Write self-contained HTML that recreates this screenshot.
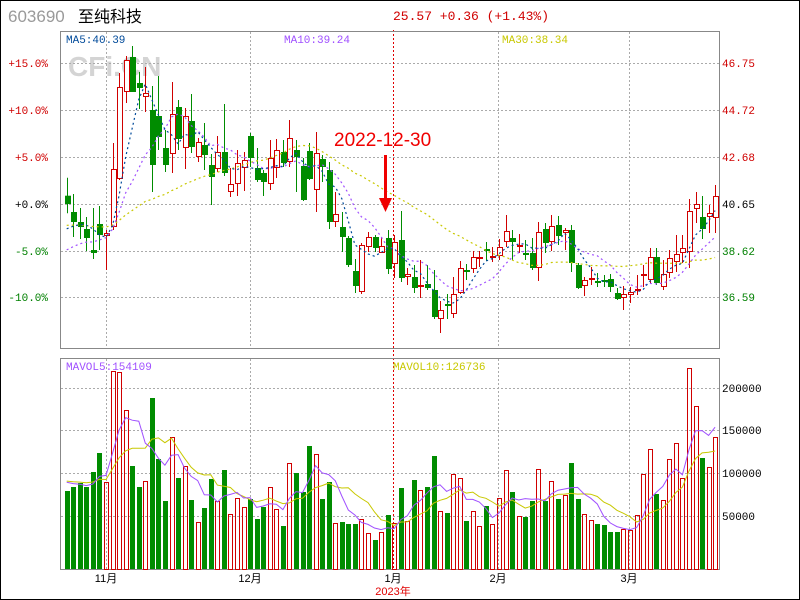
<!DOCTYPE html>
<html><head><meta charset="utf-8"><style>
html,body{margin:0;padding:0;background:#fff;}
#wrap{position:relative;width:798px;height:598px;border:1px solid #000;overflow:hidden;background:#fff;}
svg{position:absolute;left:-1px;top:-1px;}
</style></head><body><div id="wrap">
<svg id="s" width="800" height="600" xmlns="http://www.w3.org/2000/svg" font-family="Liberation Mono, monospace">
<text x="8" y="22" font-family="Liberation Sans, sans-serif" font-size="17" fill="#9a9a9a">603690</text>
<text x="78" y="22" font-family="Liberation Sans, 'Noto Sans CJK SC', sans-serif" font-size="16" fill="#000">至纯科技</text>
<text x="393" y="20" font-size="13" fill="#d00000">25.57 +0.36 (+1.43%)</text>
<text x="68" y="76" font-family="Liberation Sans, sans-serif" font-weight="bold" font-size="28" fill="#d4d4d4">CFi.CN</text>
<g id="grid"></g>
<rect x="60.5" y="31.5" width="659" height="317" fill="none" stroke="#888"/>
<rect x="60.5" y="358.5" width="659" height="211" fill="none" stroke="#888"/>
<g id="plot"></g>
<text x="66" y="43" font-size="11" fill="#004a9a">MA5:40.39</text>
<text x="284" y="43" font-size="11" fill="#a050ff">MA10:39.24</text>
<text x="502" y="43" font-size="11" fill="#c8c800">MA30:38.34</text>
<text x="66" y="370" font-size="11" fill="#a050ff">MAVOL5:154109</text>
<text x="393" y="370" font-size="11" fill="#c8c800">MAVOL10:126736</text>
<g font-size="11">
<text x="48" y="67" text-anchor="end" fill="#d00000">+15.0%</text>
<text x="48" y="114" text-anchor="end" fill="#d00000">+10.0%</text>
<text x="48" y="161" text-anchor="end" fill="#d00000">+5.0%</text>
<text x="48" y="208" text-anchor="end" fill="#000">+0.0%</text>
<text x="48" y="255" text-anchor="end" fill="#008000">-5.0%</text>
<text x="48" y="301" text-anchor="end" fill="#008000">-10.0%</text>
<text x="722" y="67" fill="#d00000">46.75</text>
<text x="722" y="114" fill="#d00000">44.72</text>
<text x="722" y="161" fill="#d00000">42.68</text>
<text x="722" y="208" fill="#000">40.65</text>
<text x="722" y="255" fill="#008000">38.62</text>
<text x="722" y="301" fill="#008000">36.59</text>
<text x="722" y="392" fill="#000">200000</text>
<text x="722" y="434" fill="#000">150000</text>
<text x="722" y="477" fill="#000">100000</text>
<text x="722" y="520" fill="#000">50000</text>
</g>
<g font-family="Liberation Sans, 'Noto Sans CJK SC', sans-serif" font-size="11" fill="#000" text-anchor="middle">
<text x="106" y="582">11月</text><text x="250" y="582">12月</text><text x="393" y="582">1月</text><text x="498" y="582">2月</text><text x="629" y="582">3月</text>
<text x="393" y="595" fill="#e00000">2023年</text>
</g>
<text x="334" y="146" font-family="Liberation Sans, sans-serif" font-size="19" fill="#f00000">2022-12-30</text>
<rect x="384" y="155" width="3" height="45" fill="#f00000"/>
<polygon points="379,198 392,198 385.5,212" fill="#f00000"/>
</svg>
</div>
<script>
var C=[
['g',195.7,204,177.7,213.3],['g',212,222,194,237],['g',222,227,208,239],['g',229,238,217,251],['g',250,253,208,259],
['g',224,235,206,250],['r',233,236,230,270],['r',169,227,143,230],['r',87,179,73,180],['r',60,92,56,103],
['g',57,92,46,92],['g',83,88,72,109],['r',93,97,67,112],['g',110,165,86,192],['g',116,137,76,150],
['g',148,165,130,172],['r',114,154,82,173],['g',107,139,100,150],['r',116,148,108,169],['g',121,147,94,153],
['r',142,157,138,162],['g',145,155,123,170],['g',165,177,154,205],['r',152,169,136,172],['g',152,173,104,176],
['r',184,192,168,197],['r',163,184,150,196],['r',160,168,152,191],['g',136,158,133,167],['g',168,180,148,182],
['g',173,182,170,196],['r',158,184,140,190],['r',150,168,139,178],['g',152,163,140,167],['r',138,162,120,167],
['g',150,157,140,192],['g',166,200,158,201],['g',151,179,143,180],['r',153,190,132,212],['g',159,167,155,182],
['g',170,222,162,229],['r',214,222,192,227],['g',227,237,212,252],['g',238,265,236,267],['g',271,286,259,293],
['r',245,292,243,294],['r',237,247,232,252],['g',237,248,235,252],['r',246,253,237,253],['g',238,269,230,274],
['r',242,264,235,278],['g',240,278,211,282],['r',274,277,268,285],['g',277,288,265,293],['r',285,286,260,298],
['g',284,288,265,290],['g',290,317,270,319],['r',310,319,301,333],['g',304,306,294,319],['r',294,314,277,318],
['r',268,293,261,294],['g',270,272,264,280],['r',257,269,251,273],['r',257,258,251,267],['g',249,251,242,261],
['r',256,257,247,262],['r',247,256,239,260],['r',231,242,215,247],['g',238,242,230,260],['r',245,247,234,253],
['g',253,254,240,260],['g',253,268,238,270],['r',232,268,222,281],['g',229,243,223,253],['r',226,242,215,251],
['g',225,236,216,245],['r',230,233,228,250],['g',230,263,225,272],['g',265,288,263,289],['r',280,286,277,296],
['r',278,279,267,285],['g',281,282,273,287],['g',280,282,275,287],['g',279,287,274,292],['g',293,299,288,300],
['r',294,298,286,310],['r',292,295,287,303],['r',289,291,275,295],['r',274,275,265,287],['r',257,280,248,283],
['g',257,283,248,285],['r',274,287,260,290],['r',258,273,250,278],['r',254,262,235,272],['r',248,253,235,263],
['r',211,252,199,268],['r',204,209,192,223],['g',217,229,196,239],['r',213,217,205,233],['r',196,218,185,233]];
var V=[491,487,483,487,472,453,482,371,372,410,466,487,481,398,459,501,437,478,466,500,522,508,479,501,470,514,498,507,499,519,507,487,509,526,463,473,492,446,454,499,482,523,522,524,524,519,533,540,532,515,523,488,521,480,490,487,456,511,
513,474,478,521,511,526,506,524,498,470,492,516,517,501,469,501,481,499,495,463,499,514,520,524,525,532,532,529,530,515,474,449,494,500,459,443,478,368,406,458,467,437];
var NS='http://www.w3.org/2000/svg';
function el(p,t,a){var e=document.createElementNS(NS,t);for(var k in a)e.setAttribute(k,a[k]);p.appendChild(e);return e;}
var G=document.getElementById('grid'),P=document.getElementById('plot');
[63,110,157,204,251,297].forEach(function(y){el(G,'line',{x1:61,x2:719,y1:y+.5,y2:y+.5,stroke:'#aaa','stroke-dasharray':'2,2'});});
[388,430,473,516].forEach(function(y){el(G,'line',{x1:61,x2:719,y1:y+.5,y2:y+.5,stroke:'#aaa','stroke-dasharray':'2,2'});});
[106,250,498,629].forEach(function(x){el(G,'line',{x1:x+.5,x2:x+.5,y1:32,y2:348,stroke:'#aaa','stroke-dasharray':'2,2'});el(G,'line',{x1:x+.5,x2:x+.5,y1:359,y2:569,stroke:'#aaa','stroke-dasharray':'2,2'});});
el(G,'line',{x1:393.5,x2:393.5,y1:30,y2:570,stroke:'#e00000','stroke-dasharray':'2,2'});
var R='#d00000',Gr='#008c00';
function X(i){return 66.7+6.55*i;}
C.forEach(function(c,i){var x=Math.round(X(i));var col=c[0]=='r'?R:Gr;
 el(P,'line',{x1:x+.5,x2:x+.5,y1:c[3],y2:c[4],stroke:col});
 var h=Math.max(1,c[2]-c[1]);
 if(c[0]=='r'){ if(h<=2) el(P,'rect',{x:x-2,y:c[1],width:6,height:2,fill:R}); else el(P,'rect',{x:x-1.5,y:c[1]+.5,width:5,height:h-1,fill:'#fff',stroke:R});}
 else el(P,'rect',{x:x-2,y:c[1],width:6,height:Math.max(2,h),fill:Gr});
 var v=V[i];
 if(c[0]=='r') el(P,'rect',{x:x-1.5,y:v+.5,width:4,height:569-v,fill:'none',stroke:R});
 else el(P,'rect',{x:x-2,y:v,width:5,height:569-v,fill:Gr});
});
var cl=C.map(function(c){return c[0]=='r'?c[1]:c[2];});
function ma(arr,n,pad){var out=[];for(var i=0;i<arr.length;i++){var s=0;for(var j=i-n+1;j<=i;j++)s+=(j<0?pad:arr[j]);out.push(s/n);}return out;}
function line(arr,col,dash,w){var d='';arr.forEach(function(y,i){d+=(i?'L':'M')+X(i).toFixed(1)+' '+y.toFixed(1);});el(P,'path',{d:d,fill:'none',stroke:col,'stroke-width':w||1,'stroke-dasharray':dash||''});}
line(ma(cl,30,226),'#c8c800','2,3',1.2);
line(ma(cl,10,255),'#a050ff','2,3',1.2);
line(ma(cl,5,235),'#004a9a','2,3',1.2);
line(ma(V,10,480),'#c8c800');
line(ma(V,5,480),'#a050ff');
</script>
</body></html>
